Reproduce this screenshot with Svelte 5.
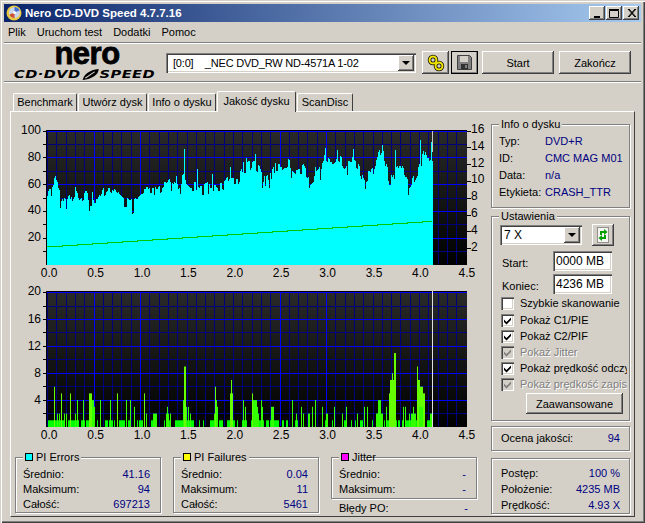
<script>
  // top chart outline, read off the screenshot as [x, y] page pixels
  const outline = [
    [48,195],[52,187],[55,182],[60,193],[65,202],[70,198],[75,190],[80,198],[85,192],[90,202],
    [97,203],[103,193],[110,188],[117,195],[123,203],[130,205],[137,200],[143,193],[150,192],
    [157,193],[163,188],[170,183],[177,185],[183,178],[190,185],[197,187],[203,190],[210,183],
    [217,185],[223,188],[230,178],[237,180],[243,167],[250,167],[253,163],[260,170],[265,183],
    [270,177],[275,167],[280,168],[287,163],[293,168],[303,170],[310,180],[317,173],[323,160],
    [330,163],[337,158],[343,165],[350,160],[357,163],[363,178],[370,177],[377,158],[382,150],
    [385,165],[390,183],[395,173],[400,165],[405,177],[410,185],[415,175],[420,163],[425,148],
    [430,163],[432,155]
  ];

  function noise(i) {
    const n = Math.sin(i * 12.9898) * 43758.5453;
    return n - Math.floor(n);
  }

  function outlineAt(x) {
    for (let i = 1; i < outline.length; i++) {
      const [x0, y0] = outline[i - 1];
      const [x1, y1] = outline[i];
      if (x <= x1) return y0 + ((y1 - y0) * (x - x0)) / (x1 - x0);
    }
    return 155;
  }

  let cyanPath = "";
  for (let x = 47; x < 433; x++) {
    const step = Math.floor(x / 2);
    let y = outlineAt(x) + (noise(step) - 0.5) * 12;
    if (noise(x + 500) > 0.94) y += 9;
    if (noise(x + 900) > 0.96) y -= 8;
    cyanPath += `M${x + 0.5} 265V${Math.round(y)}`;
  }
  const spikes = [[184, 149], [197, 169], [230, 167], [243, 163], [246, 158], [382, 145], [395, 150], [420, 140], [431, 142]];
  for (const [x, y] of spikes) cyanPath += `M${x + 0.5} 265V${y}`;

  let greenPath = "M47 246.5";
  let gy = 246.5;
  for (let x = 47; x < 431; x += 15) {
    greenPath += `H${Math.min(x + 15, 431)}V${gy}`;
    gy -= 1;
    greenPath += `V${gy}`;
  }

  // bottom chart: runs of height 1 and taller bars, as [from, to, value] in page x
  const base = [
    [48,51],[52,63],[68,78],[81,84],[86,88],[97,97],[105,107],[109,112],[114,114],[119,123],[124,124],
    [128,130],[137,137],[139,142],[151,156],[164,164],[166,170],[175,180],[181,183],[184,193],[199,199],
    [203,203],[210,213],[219,222],[227,227],[228,234],[237,237],[242,246],[251,263],[266,268],[270,278],
    [282,283],[286,287],[295,297],[301,301],[308,308],[312,312],[325,327],[332,332],[342,342],[344,346],
    [351,351],[355,355],[360,362],[364,364],[367,367],[372,372],[376,382],[384,384],[386,389],[390,396],
    [398,399],[402,403],[405,410],[411,418],[419,423],[424,424],[427,432]
  ];
  const tall = [
    [54,54,6],[57,57,2],[59,59,2],[61,61,5],[64,64,2],[66,66,2],[70,70,5],[75,75,2],[77,77,4],[83,83,4],
    [89,91,5],[92,93,4],[94,94,3],[100,100,4],[110,110,4],[117,117,5],[126,126,4],[130,130,4],[134,134,3],
    [144,144,5],[146,146,2],[153,155,2],[156,156,2],[166,168,2],[167,167,3],[170,170,2],[183,183,4],
    [184,185,9],[186,186,3],[188,188,3],[190,190,2],[214,214,2],[215,215,6],[216,216,4],[217,217,3],
    [230,232,5],[231,231,7],[243,243,4],[245,245,3],
    [252,252,5],[253,256,4],[257,257,3],[258,258,2],[261,261,4],[262,262,3],[271,273,3],[292,292,4],
    [296,296,2],[301,301,3],[303,303,2],[308,309,2],[312,312,3],[315,315,4],[322,322,3],[326,326,2],[327,327,2],
    [334,334,3],[342,342,2],[346,346,3],[357,357,2],[364,364,3],[367,367,3],[377,377,2],[376,382,2],[378,380,4],
    [386,386,3],[389,394,5],[390,393,7],[392,392,8],[394,395,11],[403,403,3],[405,405,3],[409,409,2],[411,415,2],
    [413,413,3],[417,419,7],[417,417,9],[420,422,6],[419,423,3],[423,424,5],[430,432,2]
  ];
  const bottomY = (v) => 427 - v * 6.72;

  const minorX = Array.from({ length: 45 }, (_, i) => 47.5 + i * 9.3);
  const majorX = [94, 140.5, 280, 326.5];
  const xLabels = ["0.0", "0.5", "1.0", "1.5", "2.0", "2.5", "3.0", "3.5", "4.0", "4.5"];

  const topLines = [90, 70, 50, 30, 10].map((v) => 265 - v * 1.34);
  const topMajor = [100, 80, 60, 40, 20].map((v) => 265 - v * 1.34);
  const leftTop = [100, 80, 60, 40, 20];
  const rightTop = [16, 14, 12, 10, 8, 6, 4, 2];
  const bottomMinor = [18, 14, 10, 6, 2].map(bottomY);
  const bottomMajor = [20, 16, 12, 8, 4].map(bottomY);
  const leftBottom = [20, 16, 12, 8, 4];

  const checks = [
    { label: "Szybkie skanowanie", on: false, off: false },
    { label: "Pokaż C1/PIE", on: true, off: false },
    { label: "Pokaż C2/PIF", on: true, off: false },
    { label: "Pokaż Jitter", on: true, off: true },
    { label: "Pokaż prędkość odczytu", on: true, off: false },
    { label: "Pokaż prędkość zapisu", on: true, off: true }
  ];

  const tabs = [
    { name: "Benchmark", w: 64 },
    { name: "Utwórz dysk", w: 69 },
    { name: "Info o dysku", w: 68 },
    { name: "Jakość dysku", w: 79 },
    { name: "ScanDisc", w: 56 }
  ];
</script>

{#snippet plot(top, bottom, hMinor, hMajor, left, leftY)}
  <rect x="46" y={top} width="421" height={bottom - top} fill="url(#plotbg)" />
  {#each minorX as x}
    <line x1={x} x2={x} y1={top} y2={bottom} class="minor" />
  {/each}
  {#each hMinor as y}
    <line x1="46" x2="467" y1={y} y2={y} class="minor" />
  {/each}
  {#each majorX as x}
    <line x1={x} x2={x} y1={top} y2={bottom} class="major" />
  {/each}
  {#each hMajor as y}
    <line x1="46" x2="467" y1={y} y2={y} class="major" />
  {/each}
  <path d="M46.5 {bottom}V{top + 0.5}H467" class="frame" />
  <path d="M47 {bottom - 0.5}H467" class="frame" />
  {#each hMajor.concat(hMinor) as y}
    <line x1="43" x2="46" y1={y} y2={y} class="tick" />
  {/each}
  {#each left as v, i}
    <text x="41" y={leftY[i] + 3.5} text-anchor="end" class="axis">{v}</text>
  {/each}
  {#each xLabels as l, i}
    <text x={49.2 + i * 46.4} y={bottom + 12} text-anchor="middle" class="axis">{l}</text>
  {/each}
{/snippet}

<div class="window">
  <div class="titlebar">
    <svg width="16" height="16" viewBox="0 0 16 16" class="appicon">
      <circle cx="8" cy="8" r="7.5" fill="#e8c840" />
      <circle cx="8.5" cy="7.5" r="5.5" fill="#c9d6ea" />
      <path d="M8.5 2a5.5 5.5 0 0 1 5 3.5L8.5 7.5z" fill="#3f6fd0" />
      <path d="M3.5 9.5a5.5 5.5 0 0 0 5 3.5V7.5z" fill="#d05030" />
      <circle cx="8.5" cy="7.5" r="1.5" fill="#fff" />
    </svg>
    <span class="title">Nero CD-DVD Speed 4.7.7.16</span>
    <div class="winbtns">
      <button class="raised winbtn"><svg width="9" height="9"><rect x="1" y="7" width="6" height="2" fill="#000" /></svg></button>
      <button class="raised winbtn"><svg width="10" height="9"><path d="M0.5 1.5H9.5V8.5H0.5ZM0 0.5H10" fill="none" stroke="#000" /></svg></button>
      <button class="raised winbtn"><svg width="9" height="8"><path d="M1 0L8 8M2 0L9 8M8 0L1 8M9 0L2 8" stroke="#000" fill="none" /></svg></button>
    </div>
  </div>

  <div class="menu">
    <span>Plik</span><span>Uruchom test</span><span>Dodatki</span><span>Pomoc</span>
  </div>

  <div class="toolbar">
    <div class="logo">
      <div class="nero">nero</div>
      <div class="speed">CD·DVD<svg width="13" height="11" viewBox="0 0 14 12"><path d="M1 12C2 6 6 1 13 0C13 6 8 11 1 12Z" fill="#000" /><path d="M3 10L10 3" stroke="#d4d0c8" /></svg>SPEED</div>
    </div>
    <div class="sunken combo drive">
      <span class="combotext drivetext">[0:0]    _NEC DVD_RW ND-4571A 1-02</span>
      <span class="raised arrow"><i></i></span>
    </div>
    <button class="raised tool">
      <svg width="18" height="18" viewBox="0 0 18 18">
        <circle cx="6" cy="6" r="3.5" fill="none" stroke="#000" stroke-width="3.5" />
        <circle cx="12" cy="12" r="3.5" fill="none" stroke="#000" stroke-width="3.5" />
        <circle cx="6" cy="6" r="3.5" fill="none" stroke="#f4e800" stroke-width="2" />
        <circle cx="12" cy="12" r="3.5" fill="none" stroke="#f4e800" stroke-width="2" />
      </svg>
    </button>
    <button class="raised tool focused">
      <svg width="15" height="15" viewBox="0 0 15 15">
        <path d="M0.5 0.5H12.5L14.5 2.5V14.5H0.5Z" fill="#808080" stroke="#404040" />
        <rect x="3" y="1" width="8" height="6" fill="#d4d0c8" />
        <rect x="4" y="9" width="7" height="5.5" fill="#303030" />
        <rect x="8" y="10" width="2" height="3" fill="#808080" />
      </svg>
    </button>
    <button class="raised big first">Start</button>
    <button class="raised big">Zakończ</button>
  </div>

  <div class="tabs">
    {#each tabs as t, i}
      <div class="tab" class:active={i === 3} style="width: {t.w}px">{t.name}</div>
    {/each}
  </div>

  <div class="panel">
    <div class="leftcol">
      <svg class="chart" width="477" height="162" viewBox="14 120 477 162">
        <defs>
          <linearGradient id="plotbg" x1="0" y1="0" x2="0" y2="1">
            <stop offset="0" stop-color="#2a2a2a" />
            <stop offset="1" stop-color="#000" />
          </linearGradient>
        </defs>
        {@render plot(130, 265, topLines, topMajor, leftTop, [130.5, 157.5, 184, 210.5, 237])}
        <path d={cyanPath} stroke="#0ff" fill="none" class="crisp" />
        <path d={greenPath} stroke="#00c800" fill="none" class="crisp" />
        <line x1="432.5" x2="432.5" y1="131" y2="152" stroke="#c8c8c8" />
        {#each rightTop as v, i}
          <line x1="467" x2="471" y1={131 + i * 16.8} y2={131 + i * 16.8} class="tick" />
          <text x="471" y={133 + i * 16.8} class="axis">{v}</text>
        {/each}
      </svg>

      <svg class="chart" width="477" height="163" viewBox="14 282 477 163">
        {@render plot(291, 427, bottomMinor, bottomMajor, leftBottom, [291, 319, 346, 373, 400])}
        {#each base as [a, b]}
          <rect x={a} y={bottomY(1)} width={b - a + 1} height="6.72" fill="#00ff00" />
        {/each}
        {#each tall as [a, b, v]}
          <rect x={a} y={bottomY(v)} width={b - a + 1} height={v * 6.72} fill={v > 4 ? "#66ff00" : "#33ff00"} />
        {/each}
        <line x1="432.5" x2="432.5" y1="291" y2="427" stroke="#e0e0e0" />
      </svg>

      <div class="stats">
        <div class="group stat">
          <div class="legend"><span class="swatch cyan"></span>PI Errors</div>
          <div class="row"><span>Średnio:</span><b>41.16</b></div>
          <div class="row"><span>Maksimum:</span><b>94</b></div>
          <div class="row"><span>Całość:</span><b>697213</b></div>
        </div>
        <div class="group stat">
          <div class="legend"><span class="swatch yellow"></span>PI Failures</div>
          <div class="row"><span>Średnio:</span><b>0.04</b></div>
          <div class="row"><span>Maksimum:</span><b>11</b></div>
          <div class="row"><span>Całość:</span><b>5461</b></div>
        </div>
        <div class="jittercol">
          <div class="group stat jitter">
            <div class="legend short"><span class="swatch magenta"></span>Jitter</div>
            <div class="row"><span>Średnio:</span><b>-</b></div>
            <div class="row"><span>Maksimum:</span><b>-</b></div>
          </div>
          <div class="row po"><span>Błędy PO:</span><b>-</b></div>
        </div>
      </div>
    </div>

    <div class="rightcol">
      <div class="group info">
        <div class="legend">Info o dysku</div>
        <div class="irow"><span>Typ:</span><b>DVD+R</b></div>
        <div class="irow"><span>ID:</span><b>CMC MAG M01</b></div>
        <div class="irow"><span>Data:</span><b>n/a</b></div>
        <div class="irow"><span>Etykieta:</span><b>CRASH_TTR</b></div>
      </div>

      <div class="group settings">
        <div class="legend">Ustawienia</div>
        <div class="speedrow">
          <div class="sunken combo speedsel">
            <span class="combotext">7 X</span>
            <span class="raised arrow"><i></i></span>
          </div>
          <button class="raised refresh">
            <svg width="12" height="16" viewBox="0 0 12 16">
              <rect x="0.5" y="0.5" width="11" height="15" fill="#f4f4f0" stroke="#404040" stroke-dasharray="1 1" />
              <path d="M3 8V4H7V2L10.5 5L7 8V6H5V8Z" fill="#00a000" />
              <path d="M9 8V12H5V14L1.5 11L5 8V10H7V8Z" fill="#00a000" />
            </svg>
          </button>
        </div>
        <div class="field"><span>Start:</span><div class="sunken input">0000 MB</div></div>
        <div class="field"><span>Koniec:</span><div class="sunken input">4236 MB</div></div>
        <div class="checks">
          {#each checks as c}
            <div class="check" class:off={c.off}>
              <span class="sunken box">
                {#if c.on}
                  <svg width="9" height="9" viewBox="0 0 9 9"><path d="M1 3.5L3.5 6L8 1.5V4L3.5 8.5L1 6Z" /></svg>
                {/if}
              </span>
              <span class="checklabel">{c.label}</span>
            </div>
          {/each}
        </div>
        <button class="raised advanced">Zaawansowane</button>
      </div>

      <div class="group score">
        <div class="row"><span>Ocena jakości:</span><b>94</b></div>
      </div>

      <div class="group progress">
        <div class="row"><span>Postęp:</span><b>100 %</b></div>
        <div class="row"><span>Położenie:</span><b>4235 MB</b></div>
        <div class="row"><span>Prędkość:</span><b>4.93 X</b></div>
      </div>
    </div>
  </div>
</div>

<style>
  :global(body) {
    margin: 0;
    overflow: hidden;
    background: #d4d0c8;
  }

  .window {
    width: 645px;
    height: 523px;
    box-sizing: border-box;
    padding: 4px;
    background: #d4d0c8;
    box-shadow: inset 1px 1px 0 #d4d0c8, inset 2px 2px 0 #fff, inset -1px -1px 0 #404040, inset -2px -2px 0 #808080;
    font: 11px "Liberation Sans", Arial, sans-serif;
    color: #000;
    overflow: hidden;
  }

  .raised {
    box-sizing: border-box;
    background: #d4d0c8;
    border: 0;
    padding: 0;
    box-shadow: inset -1px -1px 0 #404040, inset 1px 1px 0 #fff, inset -2px -2px 0 #808080;
    font: inherit;
    color: #000;
  }

  .sunken {
    box-sizing: border-box;
    background: #fff;
    box-shadow: inset 1px 1px 0 #808080, inset 2px 2px 0 #404040, inset -1px -1px 0 #fff, inset -2px -2px 0 #d4d0c8;
  }

  .titlebar {
    height: 18px;
    display: flex;
    align-items: center;
    background: linear-gradient(to right, #0a246a, #a6caf0);
    color: #fff;
  }

  .appicon {
    margin: 0 3px 0 2px;
  }

  .title {
    font: bold 11.5px "Liberation Sans", Arial, sans-serif;
  }

  .winbtns {
    margin-left: auto;
    display: flex;
    margin-right: 2px;
  }

  .winbtn {
    width: 16px;
    height: 14px;
    margin-left: 1px;
    display: flex;
    align-items: center;
    justify-content: center;
  }

  .menu {
    height: 20px;
    display: flex;
    align-items: center;
    gap: 11px;
    padding-left: 4px;
    border-bottom: 1px solid #808080;
    box-shadow: 0 1px 0 #fff;
  }

  .toolbar {
    height: 37px;
    display: flex;
    align-items: center;
    border-bottom: 1px solid #808080;
    box-shadow: 0 1px 0 #fff;
    margin-top: 1px;
  }

  .logo {
    width: 146px;
    margin-left: 10px;
    text-align: center;
  }

  .nero {
    font: bold 31px/17px "Liberation Sans", Arial, sans-serif;
    letter-spacing: -0.5px;
    height: 23px;
    color: #000;
    -webkit-text-stroke: 0.8px #000;
  }

  .speed {
    display: flex;
    align-items: center;
    width: 100px;
    height: 12px;
    transform: scaleX(1.46);
    transform-origin: left center;
    font: italic bold 10px "DejaVu Sans", sans-serif;
    letter-spacing: 0.3px;
    white-space: nowrap;
  }

  .combo {
    display: flex;
    align-items: center;
    white-space: pre;
  }

  .combotext {
    padding-left: 7px;
  }

  .drivetext {
    letter-spacing: -0.2px;
  }

  .arrow {
    margin-left: auto;
    margin-right: 2px;
    width: 16px;
    height: calc(100% - 4px);
    display: flex;
    align-items: center;
    justify-content: center;
  }

  .arrow i {
    border: 4px solid transparent;
    border-top: 4px solid #000;
    border-bottom: 0;
    display: block;
  }

  .drive {
    width: 250px;
    height: 20px;
    margin-left: 6px;
  }

  .tool {
    width: 27px;
    height: 23px;
    margin-left: 2px;
    display: flex;
    align-items: center;
    justify-content: center;
  }

  .drive + .tool {
    margin-left: 6px;
  }

  .focused {
    outline: 1px solid #000;
    outline-offset: -1px;
  }

  .big {
    width: 72px;
    height: 23px;
    margin-left: 5px;
  }

  .big.first {
    margin-left: 4px;
  }

  .tabs {
    display: flex;
    align-items: flex-end;
    height: 29px;
    padding-left: 9px;
  }

  .tab {
    height: 18px;
    line-height: 17px;
    text-align: center;
    margin-right: 1px;
    box-sizing: border-box;
    border-top: 1px solid #fff;
    border-left: 1px solid #fff;
    border-right: 1px solid #404040;
    border-radius: 2px 2px 0 0;
    white-space: nowrap;
  }

  .tab.active {
    height: 21px;
    line-height: 18px;
    position: relative;
    top: 1px;
    z-index: 1;
    background: #d4d0c8;
  }

  .panel {
    margin-left: 6px;
    width: 625px;
    height: 406px;
    box-sizing: border-box;
    border-top: 1px solid #fff;
    border-left: 1px solid #fff;
    border-right: 1px solid #404040;
    border-bottom: 1px solid #404040;
    padding: 8px 0 0 3px;
    display: flex;
  }

  .leftcol {
    width: 477px;
    flex: none;
  }

  .chart {
    display: block;
  }

  .chart :global(.minor) {
    stroke: #00007c;
    shape-rendering: crispEdges;
  }

  .chart :global(.major) {
    stroke: #0000ff;
    shape-rendering: crispEdges;
  }

  .chart :global(.frame) {
    stroke: #000;
    fill: none;
    shape-rendering: crispEdges;
  }

  .chart :global(.tick) {
    stroke: #000;
    shape-rendering: crispEdges;
  }

  .chart :global(.axis) {
    font: 12px "Liberation Sans", Arial, sans-serif;
    fill: #000;
  }

  .crisp {
    shape-rendering: crispEdges;
  }

  .stats {
    display: flex;
    gap: 12px;
    margin-top: 12px;
    padding-left: 1px;
  }

  .group {
    position: relative;
    box-sizing: border-box;
    border: 1px solid #808080;
    box-shadow: 1px 1px 0 #fff, inset 1px 1px 0 #fff;
  }

  .legend {
    position: absolute;
    top: -8px;
    left: 7px;
    padding: 0 2px;
    background: #d4d0c8;
    line-height: 14px;
    display: flex;
    align-items: center;
    white-space: nowrap;
  }

  .legend.short {
    width: 18px;
  }

  .swatch {
    width: 6px;
    height: 6px;
    border: 1px solid #000;
    margin-right: 3px;
    flex: none;
  }

  .cyan {
    background: #0ff;
  }

  .yellow {
    background: #ff0;
  }

  .magenta {
    background: #f0f;
  }

  .row {
    display: flex;
    justify-content: space-between;
    height: 15px;
    line-height: 15px;
  }

  b {
    font-weight: normal;
    color: #000080;
  }

  .stat {
    width: 146px;
    height: 56px;
    padding: 9px 10px 0 7px;
  }

  .jitter {
    height: 42px;
  }

  .po {
    margin-top: 2px;
    padding: 0 10px 0 8px;
  }

  .jittercol {
    width: 147px;
  }

  .rightcol {
    width: 139px;
    padding-top: 4px;
    flex: none;
  }

  .info {
    height: 84px;
    padding: 8px 0 0 7px;
  }

  .irow {
    display: flex;
    height: 17px;
    line-height: 17px;
  }

  .irow span {
    width: 46px;
  }

  .settings {
    height: 205px;
    margin-top: 8px;
    padding: 7px 0 0 8px;
  }

  .speedrow {
    display: flex;
    align-items: center;
  }

  .speedsel {
    width: 82px;
    height: 20px;
  }

  .speedsel .combotext {
    padding-left: 4px;
    font-size: 12px;
  }

  .refresh {
    width: 22px;
    height: 22px;
    margin-left: 10px;
    display: flex;
    align-items: center;
    justify-content: center;
  }

  .field {
    display: flex;
    align-items: center;
    height: 20px;
    margin-top: 3px;
    padding-left: 2px;
  }

  .field span {
    width: 51px;
    padding-top: 3px;
  }

  .input {
    width: 59px;
    height: 20px;
    line-height: 20px;
    padding-left: 3px;
    font-size: 12px;
  }

  .speedrow + .field {
    margin-top: 5px;
  }

  .checks {
    width: 127px;
    overflow: hidden;
  }

  .check {
    display: flex;
    align-items: center;
    height: 16px;
    padding-left: 1px;
    white-space: nowrap;
  }

  .check:first-child {
    height: 18px;
  }

  .box {
    width: 13px;
    height: 13px;
    flex: none;
    margin-right: 6px;
    display: flex;
    align-items: center;
    justify-content: center;
  }

  .box svg {
    fill: #000;
  }

  .off {
    color: #808080;
    text-shadow: 1px 1px 0 #fff;
  }

  .off .box {
    background: #d4d0c8;
  }

  .off .box svg {
    fill: #808080;
  }

  .advanced {
    display: block;
    width: 97px;
    height: 21px;
    margin: 1px 0 0 26px;
  }

  .score {
    height: 25px;
    margin-top: 5px;
    padding: 4px 9px 0 9px;
  }

  .progress {
    height: 56px;
    margin-top: 7px;
    padding: 6px 9px 0 9px;
  }

  .progress .row {
    height: 16px;
    line-height: 16px;
  }
</style>
